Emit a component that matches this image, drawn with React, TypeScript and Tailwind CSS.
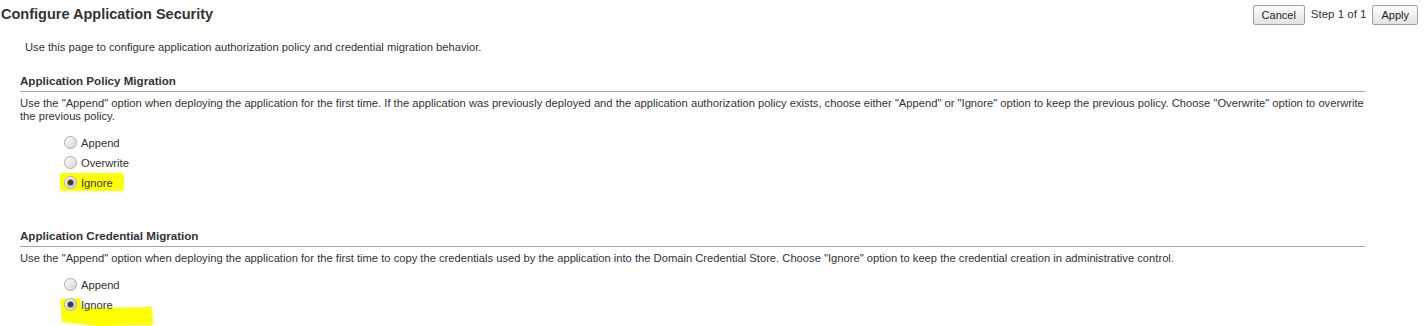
import React from "react";

type Option = { label: string; checked?: boolean };

function Radio({ checked }: { checked?: boolean }) {
  return (
    <span className="w-[13px] h-[13px] rounded-full border border-[#a9a9a9] bg-gradient-to-br from-[#ffffff] to-[#d4d4d4] flex items-center justify-center shrink-0">
      {checked && <span className="w-[5px] h-[5px] rounded-full bg-[#3a3a3a] shadow-[0_0_1px_1px_#8a8a8a]" />}
    </span>
  );
}

function RadioGroup({ options }: { options: Option[] }) {
  return (
    <div className="mt-[9px] pl-[44px] flex flex-col">
      {options.map((o) => (
        <label key={o.label} className="h-[20px] flex items-center gap-[4px]">
          <Radio checked={o.checked} />
          <span className="leading-[13px] pt-[2px]">{o.label}</span>
        </label>
      ))}
    </div>
  );
}

function Section({
  title,
  text,
  options,
  className,
}: {
  title: string;
  text: string;
  options: Option[];
  className?: string;
}) {
  return (
    <div className={`ml-[20px] w-[1345px] ${className ?? ""}`}>
      <div className="pb-[4px] border-b border-[#a3a6ad]">
        <h2 className="font-bold text-[11.6px] leading-[13px] text-[#333]">{title}</h2>
      </div>
      <p className="mt-[5px] leading-[13px] w-[1354px]">{text}</p>
      <RadioGroup options={options} />
    </div>
  );
}

function Btn({ children }: { children: React.ReactNode }) {
  return (
    <button className="h-[20px] px-[8px] border border-[#a0a0a0] rounded-[2px] bg-gradient-to-b from-[#fdfdfd] to-[#e2e2e2] text-[#1e1e1e] text-[11px] leading-none">
      {children}
    </button>
  );
}

export default function App() {
  return (
    <div
      className="relative w-[1425px] h-[326px] bg-white overflow-hidden text-[11.2px] text-[#333]"
      style={{ fontFamily: '"Liberation Sans", Arial, sans-serif' }}
    >
      {/* highlighter marks */}
      <div className="absolute left-[60px] top-[173px] w-[64px] h-[18px] rounded-[3px] bg-[#ffff00]" />
      <svg className="absolute left-0 top-0" width="1425" height="326">
        <path d="M60 299 L80 298 L82 308 L152 307 L153 325 L98 326 L62 322 Z" fill="#ffff00" />
      </svg>

      <div className="relative">
        <div className="h-[30px] flex items-center justify-between pr-[7px]">
          <h1 className="pl-[1px] text-[14.5px] font-bold text-[#333]">Configure Application Security</h1>
          <div className="flex items-center gap-[6px]">
            <Btn>Cancel</Btn>
            <span className="text-[#333] text-[11.5px]">Step 1 of 1</span>
            <Btn>Apply</Btn>
          </div>
        </div>

        <p className="mt-[11px] ml-[25px] leading-[13px]">
          Use this page to configure application authorization policy and credential migration behavior.
        </p>

        <Section
          className="mt-[20px]"
          title="Application Policy Migration"
          text={
            'Use the "Append" option when deploying the application for the first time. If the application was previously deployed and the application authorization policy exists, choose either "Append" or "Ignore" option to keep the previous policy. Choose "Overwrite" option to overwrite the previous policy.'
          }
          options={[{ label: "Append" }, { label: "Overwrite" }, { label: "Ignore", checked: true }]}
        />

        <Section
          className="mt-[37px]"
          title="Application Credential Migration"
          text={
            'Use the "Append" option when deploying the application for the first time to copy the credentials used by the application into the Domain Credential Store. Choose "Ignore" option to keep the credential creation in administrative control.'
          }
          options={[{ label: "Append" }, { label: "Ignore", checked: true }]}
        />
      </div>
    </div>
  );
}
